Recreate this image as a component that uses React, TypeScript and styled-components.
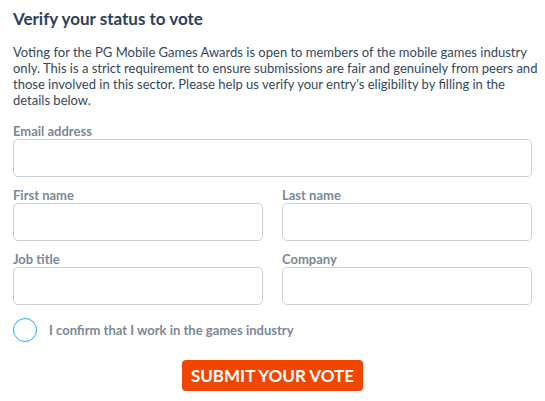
import styled, { createGlobalStyle } from "styled-components";
import { useState } from "react";

const GlobalStyle = createGlobalStyle`
  html, body {
    margin: 0;
    padding: 0;
    background: #ffffff;
  }
  * {
    box-sizing: border-box;
  }
`;

const Page = styled.div`
  padding: 3px 13px 0 13px;
  width: 545px;
  font-family: Lato, "Liberation Sans", sans-serif;
`;

const Title = styled.h2`
  margin: 0;
  font-size: 17px;
  line-height: 31px;
  font-weight: 700;
  color: #2b4159;
`;

const Intro = styled.p`
  margin: 10px -10px 0 0;
  font-size: 13px;
  line-height: 16px;
  color: #33475b;
`;

const Form = styled.form`
  margin-top: 15px;
  display: flex;
  flex-direction: column;
  gap: 10px;
`;

const Row = styled.div`
  display: grid;
  grid-template-columns: 1fr 1fr;
  column-gap: 19px;
`;

const Field = styled.label`
  display: flex;
  flex-direction: column;
`;

const Label = styled.span`
  font-size: 13px;
  line-height: 16px;
  font-weight: 700;
  color: #7b8896;
`;

const Input = styled.input`
  height: 38px;
  width: 100%;
  border: 1px solid #cbd0d4;
  border-radius: 5px;
  padding: 0 10px;
  font-family: inherit;
  font-size: 14px;
  outline: none;
  &:focus {
    border-color: #2aa7f5;
  }
`;

const Confirm = styled.label`
  margin-top: 3px;
  display: flex;
  align-items: center;
  gap: 12px;
  cursor: pointer;
`;

const Radio = styled.span<{ $checked: boolean }>`
  width: 24px;
  height: 24px;
  border-radius: 50%;
  border: 1.5px solid #2aa7f5;
  background: ${(p) => (p.$checked ? "#2aa7f5" : "#ffffff")};
  box-shadow: ${(p) => (p.$checked ? "inset 0 0 0 4px #ffffff" : "none")};
  flex-shrink: 0;
`;

const ConfirmText = styled.span`
  font-size: 13px;
  font-weight: 700;
  color: #7b8896;
`;

const Actions = styled.div`
  display: flex;
  justify-content: center;
  margin-top: 8px;
`;

const Submit = styled.button`
  height: 31px;
  padding: 0 9px;
  border: none;
  border-radius: 4px;
  background: #f04600;
  color: #ffffff;
  font-family: inherit;
  font-size: 17px;
  font-weight: 700;
  text-transform: uppercase;
  cursor: pointer;
`;

export default function App() {
  const [confirmed, setConfirmed] = useState(false);

  return (
    <>
      <GlobalStyle />
      <Page>
        <Title>Verify your status to vote</Title>
        <Intro>
          Voting for the PG Mobile Games Awards is open to members of the mobile games industry
          only. This is a strict requirement to ensure submissions are fair and genuinely from
          peers and those involved in this sector. Please help us verify your entry's eligibility
          by filling in the details below.
        </Intro>
        <Form onSubmit={(e) => e.preventDefault()}>
          <Field>
            <Label>Email address</Label>
            <Input type="email" />
          </Field>
          <Row>
            <Field>
              <Label>First name</Label>
              <Input type="text" />
            </Field>
            <Field>
              <Label>Last name</Label>
              <Input type="text" />
            </Field>
          </Row>
          <Row>
            <Field>
              <Label>Job title</Label>
              <Input type="text" />
            </Field>
            <Field>
              <Label>Company</Label>
              <Input type="text" />
            </Field>
          </Row>
          <Confirm onClick={() => setConfirmed(!confirmed)}>
            <Radio $checked={confirmed} />
            <ConfirmText>I confirm that I work in the games industry</ConfirmText>
          </Confirm>
          <Actions>
            <Submit type="submit">Submit your vote</Submit>
          </Actions>
        </Form>
      </Page>
    </>
  );
}
